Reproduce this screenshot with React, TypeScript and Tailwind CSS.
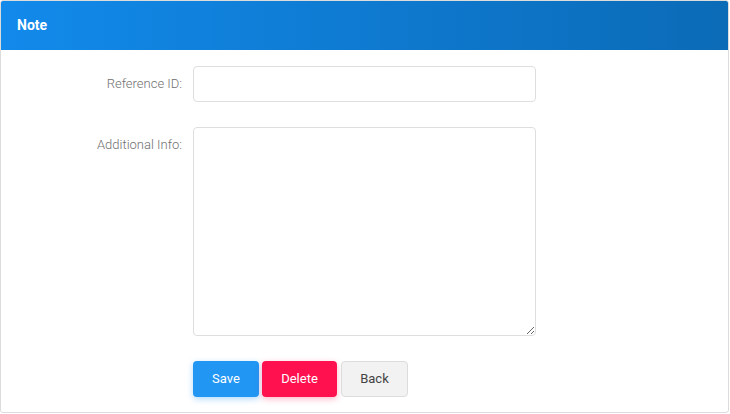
import React from "react";

export default function App() {
  return (
    <div className="w-[730px] h-[414px] bg-white" style={{ fontFamily: "Roboto, 'Liberation Sans', sans-serif" }}>
      <div className="w-[729px] h-[413px] border border-[#dcdcdc] rounded-[3px] overflow-hidden flex flex-col">
        <div className="h-[49px] shrink-0 bg-gradient-to-r from-[#128aeb] to-[#0b6bb7] flex items-center pl-[16px]">
          <span className="text-white text-[14px] font-bold">Note</span>
        </div>
        <div className="pt-[16px] flex flex-col">
          <div className="flex items-start">
            <label className="w-[181px] text-right text-[13px] leading-[36px] font-light text-[#707070]">Reference ID:</label>
            <input className="ml-[11px] w-[343px] h-[36px] border border-[#dedede] rounded-[4px] outline-none px-2 text-[13px]" />
          </div>
          <div className="flex items-start mt-[25px]">
            <label className="w-[181px] text-right text-[13px] leading-[36px] font-light text-[#707070]">Additional Info:</label>
            <textarea className="ml-[11px] w-[343px] h-[209px] border border-[#dedede] rounded-[4px] outline-none px-2 py-2 text-[13px] resize-y" />
          </div>
          <div className="flex mt-[25px] pl-[192px] gap-[3px]">
            <button className="w-[66px] h-[36px] rounded-[4px] bg-[#2196f3] text-white text-[13px] shadow-[0_2px_6px_rgba(33,150,243,0.35)]">Save</button>
            <button className="w-[75px] h-[36px] rounded-[4px] bg-[#ff1150] text-white text-[13px] shadow-[0_2px_6px_rgba(255,17,80,0.3)]">Delete</button>
            <button className="ml-[1px] w-[67px] h-[36px] rounded-[4px] bg-[#f2f2f2] border border-[#dcdcdc] text-[#444] text-[13px]">Back</button>
          </div>
        </div>
      </div>
    </div>
  );
}
